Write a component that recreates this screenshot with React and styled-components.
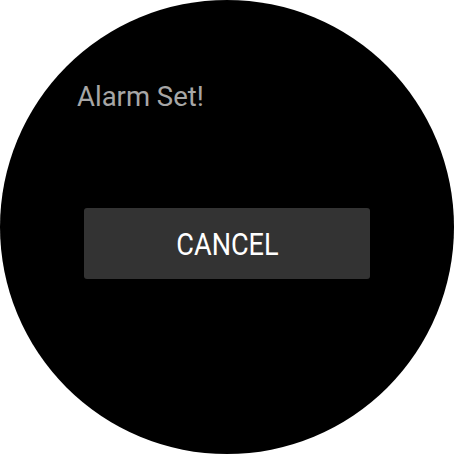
import React from 'react';
import styled, { createGlobalStyle } from 'styled-components';

const Global = createGlobalStyle`
  html, body {
    margin: 0;
    padding: 0;
    background: #ffffff;
  }
`;

const Watch = styled.div`
  width: 454px;
  height: 454px;
  border-radius: 50%;
  background: #000000;
  box-sizing: border-box;
  padding: 80px 84px 0 77px;
  display: flex;
  flex-direction: column;
  font-family: Roboto, 'Liberation Sans', sans-serif;
`;

const Message = styled.div`
  color: #a6a6a6;
  font-size: 27.5px;
  line-height: 34px;
  margin: 0;
`;

const CancelButton = styled.button`
  margin: 94px 0 0 7px;
  height: 71px;
  border: none;
  border-radius: 3px;
  background: #333333;
  color: #ffffff;
  font-family: Roboto, 'Liberation Sans', sans-serif;
  font-size: 31.5px;
  display: flex;
  align-items: center;
  justify-content: center;
  padding: 2px 0 0 0;

  span {
    display: inline-block;
    transform: scaleX(0.86);
  }
`;

export default function App() {
  return (
    <>
      <Global />
      <Watch>
        <Message>Alarm Set!</Message>
        <CancelButton>
          <span>CANCEL</span>
        </CancelButton>
      </Watch>
    </>
  );
}
